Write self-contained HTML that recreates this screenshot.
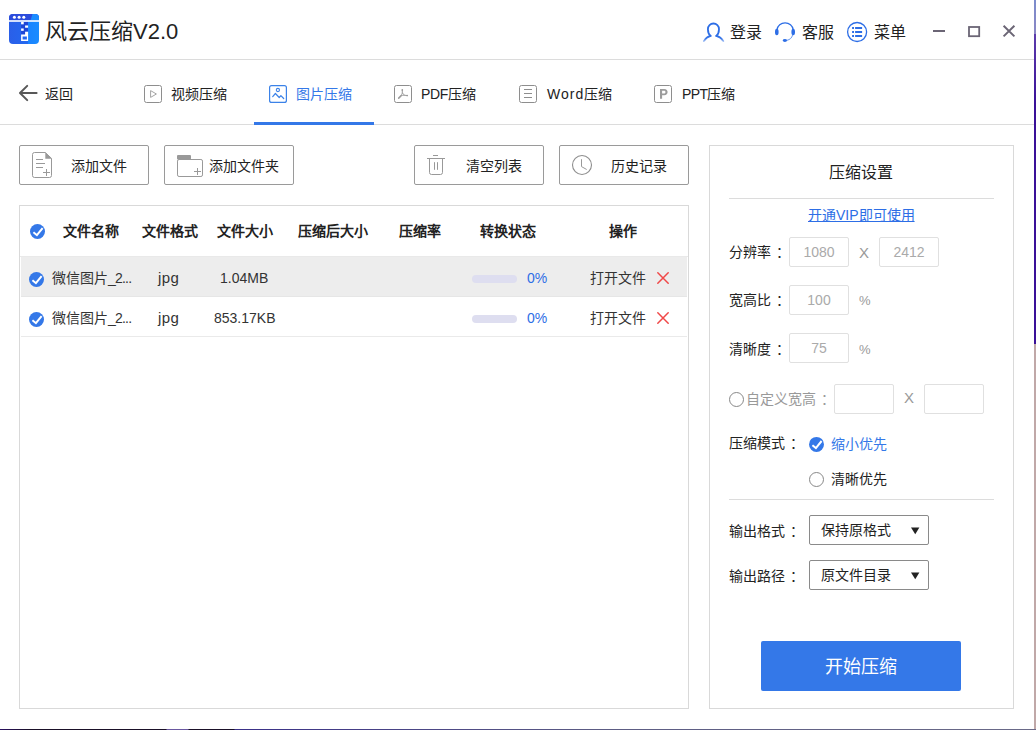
<!DOCTYPE html>
<html lang="zh-CN">
<head>
<meta charset="utf-8">
<title>风云压缩V2.0</title>
<style>
*{box-sizing:border-box;margin:0;padding:0}
html,body{width:1036px;height:730px;overflow:hidden;background:#fff}
body{position:relative;font-family:"Liberation Sans",sans-serif;font-size:14px;color:#333;line-height:1}
.abs{position:absolute}
.t{position:absolute;white-space:nowrap;line-height:20px;height:20px}
svg{position:absolute;overflow:visible}
.hline{position:absolute;height:1px;background:#dcdcdc}
/* header */
#title{left:45px;top:20px;font-size:22px;line-height:24px;height:24px;color:#222}
.hdr{font-size:16px;color:#222;top:23px}
/* nav */
.nav{top:84px;color:#222}
.nav.on{color:#3478e8}
#underline{left:254px;top:122px;width:120px;height:3px;background:#3478e8}
/* toolbar buttons */
.btn{position:absolute;top:145px;width:130px;height:40px;border:1px solid #9a9a9a;border-radius:2px;background:#fff}
.btnt{top:156px;color:#222}
/* table */
#table{left:19px;top:205px;width:670px;height:504px;border:1px solid #d9d9d9}
.th{top:221px;font-weight:bold;color:#222}
.row{position:absolute;left:21px;width:666px;height:40px}
.sep{position:absolute;left:21px;width:666px;height:1px;background:#e4e4e4}
.bar{position:absolute;left:472px;width:45px;height:8px;border-radius:4px;background:#dedef0}
.pct{color:#2d6ee6}
/* panel */
#panel{left:709px;top:145px;width:305px;height:564px;border:1px solid #d9d9d9}
.inp{position:absolute;width:60px;height:30px;border:1px solid #e0e0e0;border-radius:2px;text-align:center;line-height:28px;color:#aaa;font-size:14px}
.lab{color:#222}
.gr{color:#999}
.c{position:relative;left:4.5px}
.sel{position:absolute;left:809px;width:120px;height:30px;border:1px solid #8a8a8a;border-radius:2px}
#start{left:761px;top:641px;width:200px;height:50px;background:#3478e8;border-radius:2px;color:#fff;font-size:18px;line-height:52px;text-align:center;overflow:hidden}
</style>
</head>
<body>

<!-- ===== title bar ===== -->
<svg id="logo" style="left:9px;top:14px" width="30" height="30" viewBox="0 0 30 30">
  <defs>
    <linearGradient id="lg" x1="0" y1="0" x2="1" y2="0"><stop offset="0" stop-color="#2a5fe8"/><stop offset="0.63" stop-color="#2368f0"/><stop offset="0.64" stop-color="#1a84ff"/><stop offset="1" stop-color="#1a8cff"/></linearGradient>
    <clipPath id="lc"><rect x="0" y="0" width="30" height="30" rx="4"/></clipPath>
  </defs>
  <g clip-path="url(#lc)">
    <rect x="0" y="0" width="30" height="30" fill="url(#lg)"/>
    <rect x="0" y="0" width="30" height="6.4" fill="#2c4cdc"/>
    <path d="M23.5 0 L30 0 L30 6.4 L21.5 6.4 Z" fill="#1a8cff"/>
    <rect x="0" y="6.2" width="30" height="1.6" fill="#fff"/>
  </g>
  <circle cx="5.4" cy="3.3" r="1.5" fill="#fff"/><circle cx="10.1" cy="3.3" r="1.5" fill="#fff"/><circle cx="14.8" cy="3.3" r="1.5" fill="#fff"/>
  <g fill="#1f47d6">
    <rect x="14.7" y="8" width="4.3" height="3.5"/>
    <rect x="12.1" y="10.4" width="4" height="4"/>
    <rect x="14.7" y="13.8" width="4.3" height="3.8"/>
    <rect x="12.1" y="16.8" width="4" height="3.8"/>
  </g>
  <rect x="12.1" y="8" width="2.6" height="2.3" fill="#fff"/>
  <rect x="16.1" y="11.5" width="3" height="2.2" fill="#fff"/>
  <rect x="12.1" y="14.5" width="2.6" height="2.3" fill="#fff"/>
  <path d="M16.1 17.7 H19.1 V26.9 H12.1 V20.5 H16.1 Z M13.6 22.5 V25.4 H17.9 V22.5 Z" fill="#fff" fill-rule="evenodd"/>
</svg>
<div class="t" id="title">风云压缩V2.0</div>

<div class="t hdr" style="left:730px">登录</div>
<div class="t hdr" style="left:802px">客服</div>
<div class="t hdr" style="left:874px">菜单</div>

<div class="hline" style="left:0;top:59px;width:1034px"></div>

<!-- ===== nav ===== -->
<div class="t nav" style="left:45px">返回</div>
<div class="t nav" style="left:171px">视频压缩</div>
<div class="t nav on" style="left:296px">图片压缩</div>
<div class="t nav" style="left:421px"><span style="letter-spacing:-0.4px">PDF</span>压缩</div>
<div class="t nav" style="left:547px"><span style="letter-spacing:1.05px">Word</span>压缩</div>
<div class="t nav" style="left:682px"><span style="letter-spacing:-0.65px">PPT</span>压缩</div>
<div class="hline" style="left:0;top:124px;width:1034px"></div>
<div class="abs" id="underline"></div>

<!-- ===== toolbar ===== -->
<div class="btn" style="left:19px"></div>
<div class="btn" style="left:164px"></div>
<div class="btn" style="left:414px"></div>
<div class="btn" style="left:559px"></div>
<div class="t btnt" style="left:71px">添加文件</div>
<div class="t btnt" style="left:209px">添加文件夹</div>
<div class="t btnt" style="left:466px">清空列表</div>
<div class="t btnt" style="left:611px">历史记录</div>

<!-- ===== table ===== -->
<div class="abs" id="table"></div>
<div class="t th" style="left:63px">文件名称</div>
<div class="t th" style="left:142px">文件格式</div>
<div class="t th" style="left:217px">文件大小</div>
<div class="t th" style="left:298px">压缩后大小</div>
<div class="t th" style="left:399px">压缩率</div>
<div class="t th" style="left:480px">转换状态</div>
<div class="t th" style="left:609px">操作</div>

<div class="sep" style="top:256px;left:20px;width:668px;background:#e9e9e9"></div>
<div class="row" style="top:257px;background:#ededed"></div>
<div class="sep" style="top:296px;background:#e6e6e6"></div>
<div class="sep" style="top:336px;background:#eaeaea"></div>

<div class="t" style="left:52px;top:268px">微信图片<span style="letter-spacing:-0.8px">_2...</span></div>
<div class="t" style="left:158px;top:268px;font-size:15px;letter-spacing:0.45px">jpg</div>
<div class="t" style="left:220px;top:268px">1.04MB</div>
<div class="bar" style="top:275px"></div>
<div class="t pct" style="left:527px;top:268px">0%</div>
<div class="t" style="left:590px;top:268px">打开文件</div>

<div class="t" style="left:52px;top:308px">微信图片<span style="letter-spacing:-0.8px">_2...</span></div>
<div class="t" style="left:158px;top:308px;font-size:15px;letter-spacing:0.45px">jpg</div>
<div class="t" style="left:214px;top:308px">853.17KB</div>
<div class="bar" style="top:315px"></div>
<div class="t pct" style="left:527px;top:308px">0%</div>
<div class="t" style="left:590px;top:308px">打开文件</div>

<!-- ===== settings panel ===== -->
<div class="abs" id="panel"></div>
<div class="t" style="left:829px;top:163px;font-size:16px;color:#222">压缩设置</div>
<div class="hline" style="left:729px;top:198px;width:265px"></div>
<div class="t" style="left:808px;top:205px;color:#2d6ee6;text-decoration:underline">开通VIP即可使用</div>

<div class="t lab" style="left:729px;top:242px">分辨率<span class="c">：</span></div>
<div class="inp" style="left:789px;top:237px">1080</div>
<div class="t gr" style="left:859px;top:243px;font-size:15px">X</div>
<div class="inp" style="left:879px;top:237px">2412</div>

<div class="t lab" style="left:729px;top:290px">宽高比<span class="c">：</span></div>
<div class="inp" style="left:789px;top:285px">100</div>
<div class="t gr" style="left:859px;top:291px;font-size:13px">%</div>

<div class="t lab" style="left:729px;top:339px">清晰度<span class="c">：</span></div>
<div class="inp" style="left:789px;top:333px">75</div>
<div class="t gr" style="left:859px;top:340px;font-size:13px">%</div>

<div class="t gr" style="left:746px;top:389px">自定义宽高<span class="c">：</span></div>
<div class="inp" style="left:834px;top:384px"></div>
<div class="t gr" style="left:904px;top:388px;font-size:15px">X</div>
<div class="inp" style="left:924px;top:384px"></div>

<div class="t lab" style="left:729px;top:433px">压缩模式<span class="c">：</span></div>
<div class="t" style="left:831px;top:434px;color:#3478e8">缩小优先</div>
<div class="t" style="left:831px;top:469px;color:#222">清晰优先</div>
<div class="hline" style="left:729px;top:499px;width:265px"></div>

<div class="t lab" style="left:729px;top:521px">输出格式<span class="c">：</span></div>
<div class="sel" style="top:515px"></div>
<div class="t" style="left:821px;top:520px;color:#222">保持原格式</div>
<div class="t lab" style="left:729px;top:566px">输出路径<span class="c">：</span></div>
<div class="sel" style="top:560px"></div>
<div class="t" style="left:821px;top:565px;color:#222">原文件目录</div>

<div class="abs" id="start">开始压缩</div>


<!-- ===== icon overlay (page coordinates) ===== -->
<svg id="icons" style="left:0;top:0" width="1036" height="730" viewBox="0 0 1036 730" fill="none">
  <!-- back arrow -->
  <path d="M27.2 85.9 L20 93 L27.2 100.1 M20.6 93 H36.6" stroke="#585858" stroke-width="2" stroke-linecap="round" stroke-linejoin="round"/>
  <!-- nav: video -->
  <rect x="144.5" y="85.5" width="17" height="17" rx="2" stroke="#8e8e8e"/>
  <path d="M150.6 90.6 L156.4 94 L150.6 97.4 Z" stroke="#a4a4a4" stroke-linejoin="round"/>
  <!-- nav: image (active) -->
  <rect x="269.6" y="85.6" width="16.8" height="16.8" rx="2" stroke="#3b82e8" stroke-width="1.2"/>
  <circle cx="277.9" cy="90" r="1.6" stroke="#3b82e8" stroke-width="1.1"/>
  <path d="M272.7 96.6 L275.4 93.5 L279.2 97.5 L280.9 95.6 L283.7 98.5" stroke="#3b82e8" stroke-width="1.2" stroke-linecap="round" stroke-linejoin="round"/>
  <!-- nav: pdf -->
  <rect x="394.5" y="85.5" width="17" height="17" rx="2" stroke="#8e8e8e"/>
  <g stroke="#9a9a9a" stroke-linecap="round" stroke-linejoin="round">
    <path d="M402.3 93.2 V90.1 M403.9 95.2 L407 95.5" stroke-width="1"/>
    <path d="M401.2 95.6 L398.7 98.1" stroke-width="1.5"/>
    <path d="M402.3 93.2 L401.2 95.5 L403.9 95.2 Z" stroke-width="0.8"/>
  </g>
  <circle cx="402.3" cy="89.9" r="0.85" fill="#9a9a9a"/><circle cx="407.2" cy="95.5" r="0.85" fill="#9a9a9a"/>
  <!-- nav: word -->
  <rect x="519.5" y="85.5" width="17" height="17" rx="2" stroke="#8e8e8e"/>
  <path d="M524 89.5 H532 M524 93.5 H532 M524 97.5 H532" stroke="#8e8e8e"/>
  <!-- nav: ppt -->
  <rect x="654.5" y="85.5" width="17" height="17" rx="2" stroke="#8e8e8e"/>
  <path d="M660 89 H664.3 C666.5 89 667.6 90.4 667.6 92.1 C667.6 93.9 666.4 95.3 664.3 95.3 H662.1 V98.8 H660 Z M662.1 90.7 V93.6 H664 C665 93.6 665.5 93 665.5 92.1 C665.5 91.3 665 90.7 664 90.7 Z" fill="#9c9c9c" fill-rule="evenodd"/>

  <!-- header: user -->
  <defs><linearGradient id="ug" gradientUnits="userSpaceOnUse" x1="0" y1="36" x2="0" y2="41.6"><stop offset="0" stop-color="#2d6ee6"/><stop offset="0.45" stop-color="#3f7ae8"/><stop offset="1" stop-color="#a9c4f5"/></linearGradient></defs>
  <path d="M710.6 35.9 A5.55 8 0 0 1 707.9 29.15 A5.55 5.65 0 0 1 719 29.15 A5.55 8 0 0 1 716.3 35.9" stroke="#2d6ee6" stroke-width="1.8" stroke-linecap="round"/>
  <path d="M710.6 35.9 Q706.2 37.2 703.9 41.1 M716.3 35.9 Q721 37.2 723.3 41.1" stroke="url(#ug)" stroke-width="1.8" stroke-linecap="round"/>
  <!-- header: headset -->
  <path d="M776.9 29.8 A8.3 8.3 0 0 1 793.3 29.8" stroke="#2d6ee6" stroke-width="1.25"/>
  <ellipse cx="776.8" cy="32" rx="1.8" ry="3.2" fill="#2d6ee6"/>
  <ellipse cx="793.2" cy="32" rx="1.8" ry="3.2" fill="#2d6ee6"/>
  <path d="M792.6 35 C791.8 38 790 39.6 787 40.3" stroke="#6a9af0" stroke-width="1"/>
  <ellipse cx="784.9" cy="40.5" rx="2.1" ry="1.4" fill="#2d6ee6"/>
  <!-- header: menu -->
  <circle cx="857.1" cy="32" r="9.5" stroke="#2d6ee6" stroke-width="1.3"/>
  <g fill="#2d6ee6">
    <rect x="852.1" y="27" width="1.9" height="2"/><rect x="855.1" y="27" width="7" height="2"/>
    <rect x="852.1" y="31" width="1.9" height="2"/><rect x="855.1" y="31" width="7" height="2"/>
    <rect x="852.1" y="35" width="1.9" height="2"/><rect x="855.1" y="35" width="7" height="2"/>
  </g>
  <!-- window controls -->
  <rect x="933" y="30" width="12" height="2" fill="#6b6575"/>
  <rect x="969" y="27" width="10.2" height="9.2" stroke="#6b6575" stroke-width="1.8"/>
  <path d="M1003.6 25.8 L1014.4 36.4 M1014.4 25.8 L1003.6 36.4" stroke="#6b6575" stroke-width="2"/>

  <!-- toolbar: add file -->
  <path d="M34.5 152.5 H45.3 L51.5 158.4 V175.5 A2 2 0 0 1 49.5 177.5 H34.5 A2 2 0 0 1 32.5 175.5 V154.5 A2 2 0 0 1 34.5 152.5 Z" stroke="#999"/>
  <path d="M45.3 152.3 V158.7 H51.7 Z" fill="#999"/>
  <path d="M36 159.5 H43 M36 163.5 H45 M36 167.5 H43 M43 172.5 H50 M46.5 169 V176" stroke="#999"/>
  <!-- toolbar: add folder -->
  <rect x="177" y="155" width="14" height="4.5" rx="1" fill="#999"/>
  <rect x="177.5" y="159.5" width="25" height="17" rx="1.6" stroke="#999"/>
  <path d="M194 171.5 H201 M197.5 168 V175" stroke="#999"/>
  <!-- toolbar: trash -->
  <path d="M433 155.5 H438 M427 158.5 H445 M429.5 158.5 V172.5 A2 2 0 0 0 431.5 174.5 H440.5 A2 2 0 0 0 442.5 172.5 V158.5 M434.5 162.2 V169.8 M437.5 162.2 V169.8" stroke="#999"/>
  <!-- toolbar: clock -->
  <circle cx="582" cy="165" r="9.5" stroke="#8e8e8e" stroke-width="1.1"/>
  <path d="M581.5 159.2 V166.6 L586.7 169.5" stroke="#999" stroke-linejoin="round"/>

  <!-- table checks -->
  <g id="chk">
    <circle cx="37.5" cy="231.5" r="7.5" fill="#3478e8"/>
    <path d="M33.4 232.3 L36.9 235.2 L42.6 228.1" stroke="#fff" stroke-width="2"/>
  </g>
  <circle cx="36.5" cy="279.5" r="7.5" fill="#3478e8"/>
  <path d="M32.4 280.3 L35.9 283.2 L41.6 276.1" stroke="#fff" stroke-width="2"/>
  <circle cx="36.5" cy="319.5" r="7.5" fill="#3478e8"/>
  <path d="M32.4 320.3 L35.9 323.2 L41.6 316.1" stroke="#fff" stroke-width="2"/>
  <!-- red x -->
  <path d="M657.8 272.8 L668.2 283.2 M668.2 272.8 L657.8 283.2" stroke="#f04848" stroke-width="1.5" stroke-linecap="round"/>
  <path d="M657.8 312.8 L668.2 323.2 M668.2 312.8 L657.8 323.2" stroke="#f04848" stroke-width="1.5" stroke-linecap="round"/>

  <!-- panel radios -->
  <circle cx="736.5" cy="399.5" r="7" stroke="#888"/>
  <circle cx="816.5" cy="444.4" r="7.5" fill="#3478e8"/>
  <path d="M812.4 445.2 L815.9 448.1 L821.6 441" stroke="#fff" stroke-width="2"/>
  <circle cx="816.5" cy="479.5" r="7" stroke="#888"/>
  <!-- select arrows -->
  <path d="M911 527.5 H919.4 L915.2 534.3 Z" fill="#222"/>
  <path d="M911 572.5 H919.4 L915.2 579.3 Z" fill="#222"/>
</svg>

<!-- ===== window edge artefacts ===== -->
<div class="abs" style="left:1034px;top:0;width:2px;height:34px;background:linear-gradient(#7c8ccc,#8a86c4)"></div>
<div class="abs" style="left:1034px;top:34px;width:2px;height:310px;background:linear-gradient(#5c3cac,#3a1098 70px,#3a1098)"></div>
<div class="abs" style="left:1034px;top:344px;width:2px;height:386px;background:#c0a8a8"></div>
<div class="abs" style="left:0;top:729px;width:1036px;height:1px;background:linear-gradient(90deg,#2a1060 0,#1a1028 30px,#1a1028 166px,#6a58a0 167px,#6a58a0 188px,#1a1028 189px,#1a1028 234px,#3a3088 235px,#5c5c84 600px,#6a6a88 1036px)"></div>

</body>
</html>
